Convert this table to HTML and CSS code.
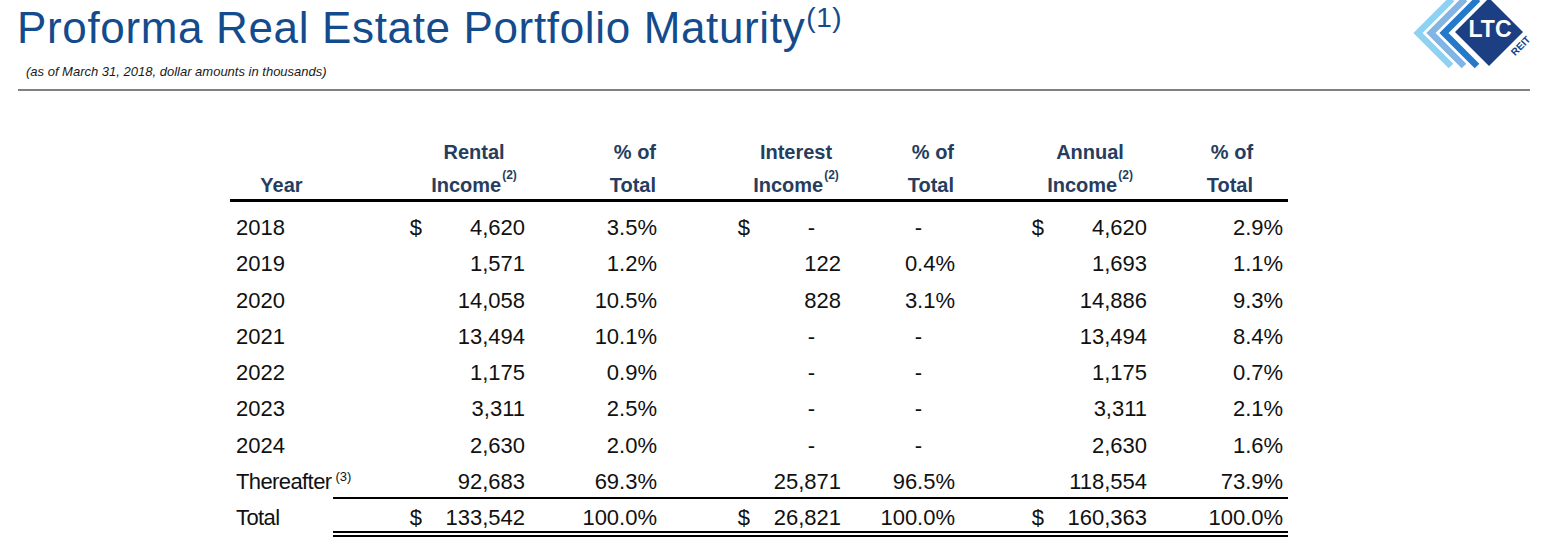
FILE: index.html
```html
<!DOCTYPE html>
<html lang="en">
<head>
<meta charset="utf-8">
<title>Proforma Real Estate Portfolio Maturity</title>
<link rel="stylesheet" href="styles.css">
</head>
<body>
<header class="top">
  <div class="titles">
    <h1 class="title">Proforma Real Estate Portfolio Maturity<span class="title-note">(1)</span></h1>
    <p class="subtitle">(as of March 31, 2018, dollar amounts in thousands)</p>
  </div>
  <svg class="logo" width="130" height="75" viewBox="0 0 130 75" aria-label="LTC REIT">
    <polyline points="47,-1 13,33 46,66" fill="none" stroke="#8dd2f3" stroke-width="6.5" stroke-miterlimit="4"/>
    <polyline points="60,-1 26,33 59,66" fill="none" stroke="#82b5e3" stroke-width="6.5" stroke-miterlimit="4"/>
    <polyline points="73,-1 39,33 72,66" fill="none" stroke="#2579c9" stroke-width="6.5" stroke-miterlimit="4"/>
    <polygon points="84,-2 118,32 84,66 50,32" fill="#1c3f83"/>
    <text x="85" y="37" class="logo-ltc" text-anchor="middle">LTC</text>
    <text x="116" y="49" class="logo-reit" text-anchor="middle" transform="rotate(-45 116 46)">REIT</text>
  </svg>
</header>
<hr class="rule">
<main class="content">
  <table class="maturity">
    <colgroup>
      <col class="w1"><col class="w2"><col class="w3"><col class="w4"><col class="w5">
      <col class="w6"><col class="w7"><col class="w8"><col class="w9"><col class="w10">
    </colgroup>
    <thead>
      <tr>
        <th class="h-year"><span class="l2">Year</span></th>
        <th colspan="2" class="h-inc h-rental"><span class="l1">Rental</span><span class="l2">Income<sup class="fn">(2)</sup></span></th>
        <th class="h-pct"><span class="l1">% of</span><span class="l2">Total</span></th>
        <th colspan="2" class="h-inc h-interest"><span class="l1">Interest</span><span class="l2">Income<sup class="fn">(2)</sup></span></th>
        <th class="h-pct"><span class="l1">% of</span><span class="l2">Total</span></th>
        <th colspan="2" class="h-inc h-annual"><span class="l1">Annual</span><span class="l2">Income<sup class="fn">(2)</sup></span></th>
        <th class="h-pct h-pct-last"><span class="l1">% of</span><span class="l2">Total</span></th>
      </tr>
    </thead>
    <tbody>
      <tr class="first">
        <td class="yr">2018</td><td class="cur">$</td><td class="num">4,620</td><td class="num">3.5%</td>
        <td class="cur">$</td><td class="num dash-v">-</td><td class="num dash-p">-</td>
        <td class="cur">$</td><td class="num">4,620</td><td class="num">2.9%</td>
      </tr>
      <tr>
        <td class="yr">2019</td><td class="cur"></td><td class="num">1,571</td><td class="num">1.2%</td>
        <td class="cur"></td><td class="num">122</td><td class="num">0.4%</td>
        <td class="cur"></td><td class="num">1,693</td><td class="num">1.1%</td>
      </tr>
      <tr>
        <td class="yr">2020</td><td class="cur"></td><td class="num">14,058</td><td class="num">10.5%</td>
        <td class="cur"></td><td class="num">828</td><td class="num">3.1%</td>
        <td class="cur"></td><td class="num">14,886</td><td class="num">9.3%</td>
      </tr>
      <tr>
        <td class="yr">2021</td><td class="cur"></td><td class="num">13,494</td><td class="num">10.1%</td>
        <td class="cur"></td><td class="num dash-v">-</td><td class="num dash-p">-</td>
        <td class="cur"></td><td class="num">13,494</td><td class="num">8.4%</td>
      </tr>
      <tr>
        <td class="yr">2022</td><td class="cur"></td><td class="num">1,175</td><td class="num">0.9%</td>
        <td class="cur"></td><td class="num dash-v">-</td><td class="num dash-p">-</td>
        <td class="cur"></td><td class="num">1,175</td><td class="num">0.7%</td>
      </tr>
      <tr>
        <td class="yr">2023</td><td class="cur"></td><td class="num">3,311</td><td class="num">2.5%</td>
        <td class="cur"></td><td class="num dash-v">-</td><td class="num dash-p">-</td>
        <td class="cur"></td><td class="num">3,311</td><td class="num">2.1%</td>
      </tr>
      <tr>
        <td class="yr">2024</td><td class="cur"></td><td class="num">2,630</td><td class="num">2.0%</td>
        <td class="cur"></td><td class="num dash-v">-</td><td class="num dash-p">-</td>
        <td class="cur"></td><td class="num">2,630</td><td class="num">1.6%</td>
      </tr>
      <tr class="after">
        <td class="yr word">Thereafter<sup class="fn-row">(3)</sup></td><td class="cur"></td><td class="num">92,683</td><td class="num">69.3%</td>
        <td class="cur"></td><td class="num">25,871</td><td class="num">96.5%</td>
        <td class="cur"></td><td class="num">118,554</td><td class="num">73.9%</td>
      </tr>
      <tr class="total">
        <td class="yr word">Total</td><td class="cur">$</td><td class="num">133,542</td><td class="num">100.0%</td>
        <td class="cur">$</td><td class="num">26,821</td><td class="num">100.0%</td>
        <td class="cur">$</td><td class="num">160,363</td><td class="num">100.0%</td>
      </tr>
    </tbody>
  </table>
</main>
</body>
</html>
```
FILE: styles.css
```css
html, body {
  margin: 0;
  padding: 0;
  background: #ffffff;
}

body {
  font-family: "Liberation Sans", Arial, sans-serif;
  color: #111111;
  width: 1542px;
  height: 553px;
  overflow: hidden;
}

.top {
  display: flex;
  justify-content: space-between;
  align-items: flex-start;
  padding-right: 7px;
}

.title {
  margin: 0 0 0 17px;
  padding-top: 3px;
  font-family: "Liberation Sans", Arial, sans-serif;
  font-weight: 400;
  font-size: 44px;
  line-height: 50px;
  letter-spacing: 0.65px;
  color: #134b8c;
  white-space: nowrap;
}

.title-note {
  font-size: 28px;
  line-height: 28px;
  vertical-align: 16px;
  letter-spacing: 0.5px;
  margin-left: 1px;
}

.subtitle {
  margin: 11px 0 0 26px;
  font-size: 13px;
  line-height: 16px;
  font-style: italic;
  color: #1a1a1a;
}

.logo {
  display: block;
  flex: none;
}

.logo-ltc {
  font-family: "Liberation Sans", Arial, sans-serif;
  font-weight: 700;
  font-size: 23px;
  fill: #ffffff;
}

.logo-reit {
  font-family: "Liberation Sans", Arial, sans-serif;
  font-weight: 700;
  font-size: 10px;
  fill: #1c3f83;
}

.rule {
  border: 0;
  height: 2px;
  background: #808080;
  margin: 9px 12px 0 18px;
}

.content {
  padding-left: 230px;
  padding-top: 47px;
}

.maturity {
  table-layout: fixed;
  width: 1058px;
  border-collapse: separate;
  border-spacing: 0;
}

.w1 { width: 103px; }
.w2 { width: 89px; }
.w3 { width: 108px; }
.w4 { width: 132px; }
.w5 { width: 88px; }
.w6 { width: 96px; }
.w7 { width: 114px; }
.w8 { width: 84px; }
.w9 { width: 108px; }
.w10 { width: 136px; }

.maturity th {
  padding: 0;
  font-weight: 700;
  font-size: 20px;
  color: #263d60;
  vertical-align: bottom;
  text-align: center;
  border-bottom: 3px solid #000000;
  white-space: nowrap;
}

.l1, .l2 {
  display: block;
  line-height: 28px;
}

.l1 {
  margin-bottom: 5px;
}

.maturity th.h-rental { padding-left: 85px; }
.maturity th.h-interest { padding-left: 84px; }
.maturity th.h-annual { padding-left: 68px; }

.maturity th.h-pct {
  text-align: right;
  padding-right: 6px;
}

.maturity th.h-pct-last {
  padding-right: 35px;
}

.fn {
  font-size: 12px;
  line-height: 0;
  vertical-align: baseline;
  position: relative;
  top: -13px;
  margin-left: 1px;
}

.maturity td {
  padding: 0;
  font-size: 22px;
  line-height: 36.3px;
  color: #111111;
  white-space: nowrap;
}

.maturity tr.first td {
  padding-top: 8px;
}

.maturity td.yr {
  text-align: left;
  padding-left: 6px;
}

.maturity td.word {
  letter-spacing: -0.6px;
}

.cur {
  text-align: right;
}

.maturity td.num {
  text-align: right;
  padding-right: 5px;
}

.maturity td.dash-v {
  padding-right: 31px;
}

.maturity td.dash-p {
  padding-right: 38px;
}

.fn-row {
  font-size: 13px;
  line-height: 0;
  vertical-align: baseline;
  position: relative;
  top: -8px;
  margin-left: 4px;
  letter-spacing: 0;
}

.maturity tr.after td {
  line-height: 28.6px;
  padding-top: 4px;
  border-bottom: 2px solid #000000;
}

.maturity tr.after td.yr {
  border-bottom-color: transparent;
}

.maturity tr.total td {
  line-height: 27.2px;
  padding-top: 5px;
  border-bottom: 6px double #000000;
}

.maturity tr.total td.yr {
  border-bottom-color: transparent;
}
```
